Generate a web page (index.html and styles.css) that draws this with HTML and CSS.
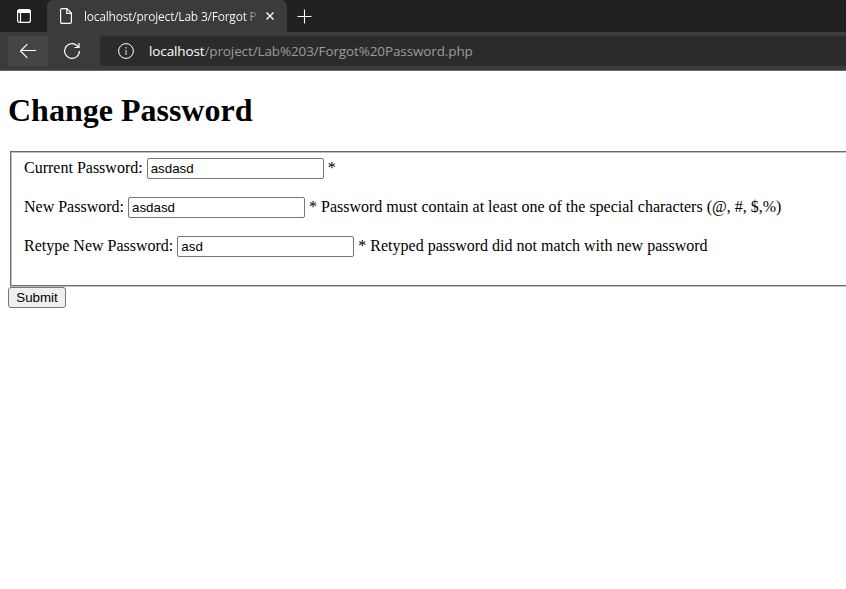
FILE: index.html
```html
<!DOCTYPE html>
<html lang="en">
<head>
<meta charset="utf-8">
<title>Change Password</title>
<link rel="stylesheet" href="styles.css">
</head>
<body>
<header class="browser">
  <div class="tabstrip">
    <div class="tab-actions"><svg width="16" height="16" viewBox="0 0 16 16" fill="none" stroke="#fff" stroke-width="1.2"><rect x="1.6" y="1.6" width="12.8" height="12.8" rx="2"/><path d="M4.5 5v9.5"/><path d="M1.5 5V3.5a2 2 0 0 1 2-2h9a2 2 0 0 1 2 2V5z" fill="#fff" stroke="none"/></svg></div>
    <div class="tab">
      <svg class="page-icon" width="14" height="16" viewBox="0 0 14 16" fill="none" stroke="#fff" stroke-width="1.2"><path d="M3 .6h5l4.4 4.4v9a1.4 1.4 0 0 1-1.4 1.4H3A1.4 1.4 0 0 1 1.6 14V2A1.4 1.4 0 0 1 3 .6zM7.8 .8V5.3h4.6"/></svg>
      <span class="tab-title">localhost/project/Lab 3/Forgot P</span>
      <svg class="close" width="10" height="10" viewBox="0 0 10 10" stroke="#fff" stroke-width="1.3"><path d="M1.5 1.5l7 7M8.5 1.5l-7 7"/></svg>
    </div>
    <svg class="new-tab" width="15" height="15" viewBox="0 0 15 15" stroke="#fff" stroke-width="1.1"><path d="M7.5 .5v14M.5 7.5h14"/></svg>
  </div>
  <div class="toolbar">
    <div class="back"><svg width="18" height="16" viewBox="0 0 18 16" fill="none" stroke="#fff" stroke-width="1.2"><path d="M8.3 1.2L1.5 8l6.8 6.8M1.5 7.5h15.5"/></svg></div>
    <svg class="reload" width="18" height="18" viewBox="0 0 18 18" fill="none" stroke="#fff" stroke-width="1.2"><path d="M16.4 9a7.4 7.4 0 1 1-2.5-5.5L16 5.5M16 1v4.5h-4.5"/></svg>
    <div class="address">
      <svg width="16" height="16" viewBox="0 0 16 16" fill="none" stroke="#fff"><circle cx="8" cy="8" r="7.4"/><path d="M8 7v5M8 4v1.5" stroke="#bbb" stroke-width="1.3"/></svg>
      <span class="url"><b>localhost</b>/project/Lab%203/Forgot%20Password.php</span>
    </div>
  </div>
</header>
<main class="page">
  <h1>Change Password</h1>
  <form>
    <fieldset>
      <label>Current Password: <input type="text" value="asdasd"></label> *<br><br>
      <label>New Password: <input type="text" value="asdasd"></label> * Password must contain at least one of the special characters (@, #, $,%)<br><br>
      <label>Retype New Password: <input type="text" value="asd"></label> * Retyped password did not match with new password<br><br>
    </fieldset>
    <input class="submit" type="submit" value="Submit">
  </form>
</main>
</body>
</html>
```
FILE: styles.css
```css
body { margin: 0; overflow: hidden; background: #fff; font: 16px "Liberation Serif", serif; color: #000; }
.browser { font-family: "Open Sans", "Noto Sans", sans-serif; color: #fff; }
.tabstrip { display: flex; align-items: center; height: 32px; background: #202020; }
.tab-actions { display: flex; justify-content: center; width: 47px; }
.tab { display: flex; align-items: center; box-sizing: border-box; width: 240px; height: 32px; padding: 0 12px; background: #3b3b3b; border-radius: 6px 6px 0 0; }
.page-icon { flex: none; }
.tab-title { flex: none; width: 173px; margin: 0 8px 0 11px; white-space: nowrap; font-size: 12px; letter-spacing: -.22px; color: transparent; background: linear-gradient(to right, #fff 160px, #3b3b3b 176px); -webkit-background-clip: text; background-clip: text; }
.close { flex: none; }
.new-tab { margin-left: 10px; }
.toolbar { display: flex; align-items: center; box-sizing: border-box; height: 39px; padding-left: 8px; background: #3b3b3b; border-bottom: 1px solid #656565; }
.back { display: flex; align-items: center; justify-content: center; width: 40px; height: 30px; background: #454545; border-radius: 2px; }
.reload { margin: 0 19px 0 15px; }
.address { display: flex; flex: 1; align-items: center; height: 30px; padding-left: 18px; background: #2b2b2b; border-radius: 3px 0 0 3px; }
.url { margin-left: 15px; font-size: 13.5px; letter-spacing: -.12px; color: #9b9b9b; }
.url b { font-weight: 400; color: #fff; }
.page { padding: 0 8px; }
h1 { margin: 21px 0 22px; font-size: 32px; line-height: 37px; }
form { width: 860px; }
fieldset { box-sizing: border-box; height: 136px; margin: 0 2px; padding: 5px 12px 0; border: 2px groove #c0c0c0; line-height: 18px; }
input { box-sizing: border-box; height: 21px; padding: 1px 3px; font: 13.333px "Liberation Sans", Arial, sans-serif; }
fieldset input { width: 177px; border: 1px solid #767676; border-radius: 2px; }
.submit { display: block; width: 58px; padding: 1px 6px; border: 1px solid #767676; border-radius: 3px; background: #efefef; }
```
